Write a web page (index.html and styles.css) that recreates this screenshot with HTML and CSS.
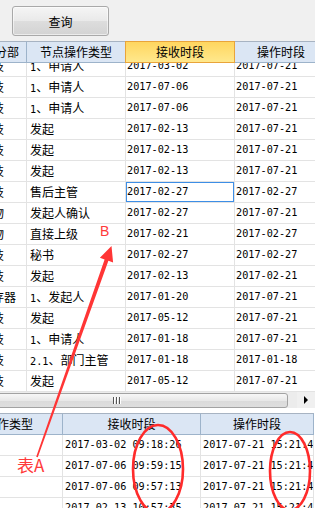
FILE: index.html
```html
<!DOCTYPE html>
<html lang="zh-CN">
<head>
<meta charset="utf-8">
<link rel="stylesheet" href="styles.css">
</head>
<body>
<div class="toolbar"><button class="btn">查询</button></div>

<div class="grid top-grid">
  <div class="cols head">
    <div class="hc">子分部</div>
    <div class="hc">节点操作类型</div>
    <div class="hc sel">接收时段</div>
    <div class="hc">操作时段</div>
  </div>
  <div class="viewport">
    <div class="cols rows">
      <div class="c c1">科技</div><div class="c c2"><span class="n">1</span>、申请人</div><div class="c n d">2017-03-02</div><div class="c n d">2017-07-21</div>
      <div class="c c1">科技</div><div class="c c2"><span class="n">1</span>、申请人</div><div class="c n d">2017-07-06</div><div class="c n d">2017-07-21</div>
      <div class="c c1">科技</div><div class="c c2"><span class="n">1</span>、申请人</div><div class="c n d">2017-07-06</div><div class="c n d">2017-07-21</div>
      <div class="c c1">科技</div><div class="c c2">发起</div><div class="c n d">2017-02-13</div><div class="c n d">2017-07-21</div>
      <div class="c c1">科技</div><div class="c c2">发起</div><div class="c n d">2017-02-13</div><div class="c n d">2017-07-21</div>
      <div class="c c1">科技</div><div class="c c2">发起</div><div class="c n d">2017-02-13</div><div class="c n d">2017-07-21</div>
      <div class="c c1">科技</div><div class="c c2">售后主管</div><div class="c n d focus">2017-02-27</div><div class="c n d">2017-02-27</div>
      <div class="c c1">货物</div><div class="c c2">发起人确认</div><div class="c n d">2017-02-27</div><div class="c n d">2017-07-21</div>
      <div class="c c1">货物</div><div class="c c2">直接上级</div><div class="c n d">2017-02-21</div><div class="c n d">2017-02-27</div>
      <div class="c c1">科技</div><div class="c c2">秘书</div><div class="c n d">2017-02-27</div><div class="c n d">2017-02-27</div>
      <div class="c c1">科技</div><div class="c c2">发起</div><div class="c n d">2017-02-13</div><div class="c n d">2017-02-21</div>
      <div class="c c1">寄存器</div><div class="c c2"><span class="n">1</span>、发起人</div><div class="c n d">2017-01-20</div><div class="c n d">2017-07-21</div>
      <div class="c c1">科技</div><div class="c c2">发起</div><div class="c n d">2017-05-12</div><div class="c n d">2017-07-21</div>
      <div class="c c1">科技</div><div class="c c2"><span class="n">1</span>、申请人</div><div class="c n d">2017-01-18</div><div class="c n d">2017-07-21</div>
      <div class="c c1">科技</div><div class="c c2"><span class="n">2.1</span>、部门主管</div><div class="c n d">2017-01-18</div><div class="c n d">2017-01-18</div>
      <div class="c c1">科技</div><div class="c c2">发起</div><div class="c n d">2017-05-12</div><div class="c n d">2017-07-21</div>
    </div>
  </div>
</div>

<div class="hscroll">
  <div class="thumb"><span class="grip"><i></i><i></i><i></i></span></div>
  <div class="sbtn"><span class="tri"></span></div>
</div>

<div class="gap"></div>

<div class="grid bottom-grid">
  <div class="cols head">
    <div class="hc">节点操作类型</div>
    <div class="hc">接收时段</div>
    <div class="hc">操作时段</div>
  </div>
  <div class="cols rows">
    <div class="c"></div><div class="c n t">2017-03-02 09:18:26</div><div class="c n t">2017-07-21 15:21:45</div>
    <div class="c"></div><div class="c n t">2017-07-06 09:59:15</div><div class="c n t">2017-07-21 15:21:45</div>
    <div class="c"></div><div class="c n t">2017-07-06 09:57:13</div><div class="c n t">2017-07-21 15:21:45</div>
    <div class="c"></div><div class="c n t">2017-02-13 10:57:35</div><div class="c n t">2017-07-21 15:21:45</div>
  </div>
</div>

<svg class="annot" width="315" height="508" viewBox="0 0 315 508">
  <polygon fill="#ff3535" points="111.5,246 113.1,262.4 108.4,260.8 37.8,457.3 36.2,456.7 104.6,259.4 99.9,257.8"/>
  <ellipse cx="158" cy="469" rx="25" ry="44" fill="none" stroke="#ff2b2b" stroke-width="2.6"/>
  <ellipse cx="290" cy="471" rx="20" ry="39" fill="none" stroke="#ff2b2b" stroke-width="2.6"/>
</svg>
<div class="note note-b">B</div>
<div class="note note-a">表A</div>
</body>
</html>
```

FILE: styles.css
```css
* { box-sizing: border-box; }
html, body { margin: 0; padding: 0; }
body {
  width: 315px;
  height: 508px;
  overflow: hidden;
  position: relative;
  background: #fff;
  color: #000;
  font-family: "Noto Sans CJK SC", sans-serif;
  font-size: 12px;
}

.toolbar {
  height: 41px;
  background: #f0f0f0;
  padding: 6px 0 0 12px;
}
.btn {
  display: block;
  width: 97px;
  height: 30px;
  padding: 0;
  border: 1px solid #a9a9a9;
  border-radius: 3px;
  background: linear-gradient(#f5f5f5, #e9e9e9 50%, #dddddd 51%, #d3d3d3);
  box-shadow: inset 0 0 0 1px rgba(255, 255, 255, 0.55);
  font: 12px "Noto Sans CJK SC", sans-serif;
  color: #000;
}

.grid { overflow: hidden; }
.cols { display: grid; }
.top-grid .cols { grid-template-columns: 51px 99px 109px 93px; margin-left: -24px; }
.bottom-grid .cols { grid-template-columns: 131px 138px 113px; margin-left: -68px; }

.hc {
  height: 22px;
  line-height: 20px;
  text-align: center;
  white-space: nowrap;
  overflow: hidden;
  background: #dbe6f4;
  border-top: 1px solid #a7b3c2;
  border-bottom: 1px solid #9db3ca;
  border-right: 1px solid #9db3ca;
}
.hc.sel {
  background: linear-gradient(#ffd65f, #ffe88d);
  border-color: #e9a43a;
  box-shadow: -1px 0 0 #e9a43a;
}

.top-grid .viewport { height: 329px; overflow: hidden; }
.top-grid .rows { margin-top: -7px; }

.c {
  height: 21px;
  line-height: 20px;
  padding-left: 3px;
  white-space: nowrap;
  overflow: hidden;
  border-right: 1px solid #e3e3e3;
  border-bottom: 1px solid #e3e3e3;
}
.c1 { padding-left: 4px; }
.n { font-family: "DejaVu Sans Mono", monospace; font-size: 10.2px; }
.c.d { padding-left: 1px; }
.c.t { padding-left: 2px; }
.focus { box-shadow: inset 0 0 0 1px #3d8ee6; }

.hscroll {
  height: 16px;
  display: flex;
  align-items: center;
  background: #ececec;
  overflow: hidden;
}
.thumb {
  flex: none;
  margin-left: -56px;
  width: 344px;
  height: 15px;
  border: 1px solid #a2a2a2;
  border-radius: 3px;
  background: linear-gradient(#f7f7f7, #e8e8e8 50%, #dadada 51%, #dedede);
  display: flex;
  align-items: center;
  justify-content: center;
}
.grip { display: flex; gap: 2px; }
.grip i { width: 1px; height: 7px; background: #555; box-shadow: 1px 0 0 #fff; }
.sbtn {
  margin-left: auto;
  width: 18px;
  height: 16px;
  display: flex;
  align-items: center;
  justify-content: center;
  background: #f0f0f0;
}
.tri {
  width: 0;
  height: 0;
  border-left: 4px solid #000;
  border-top: 4px solid transparent;
  border-bottom: 4px solid transparent;
}

.gap { height: 5px; }

.annot { position: absolute; left: 0; top: 0; pointer-events: none; }
.note { position: absolute; color: #ff3a3a; line-height: 1; }
.note-b { left: 100px; top: 224px; font: 14px/1 "Liberation Sans", sans-serif; }
.note-a { left: 17px; top: 456px; font: 17px/1 "Noto Sans CJK SC", sans-serif; }
```
